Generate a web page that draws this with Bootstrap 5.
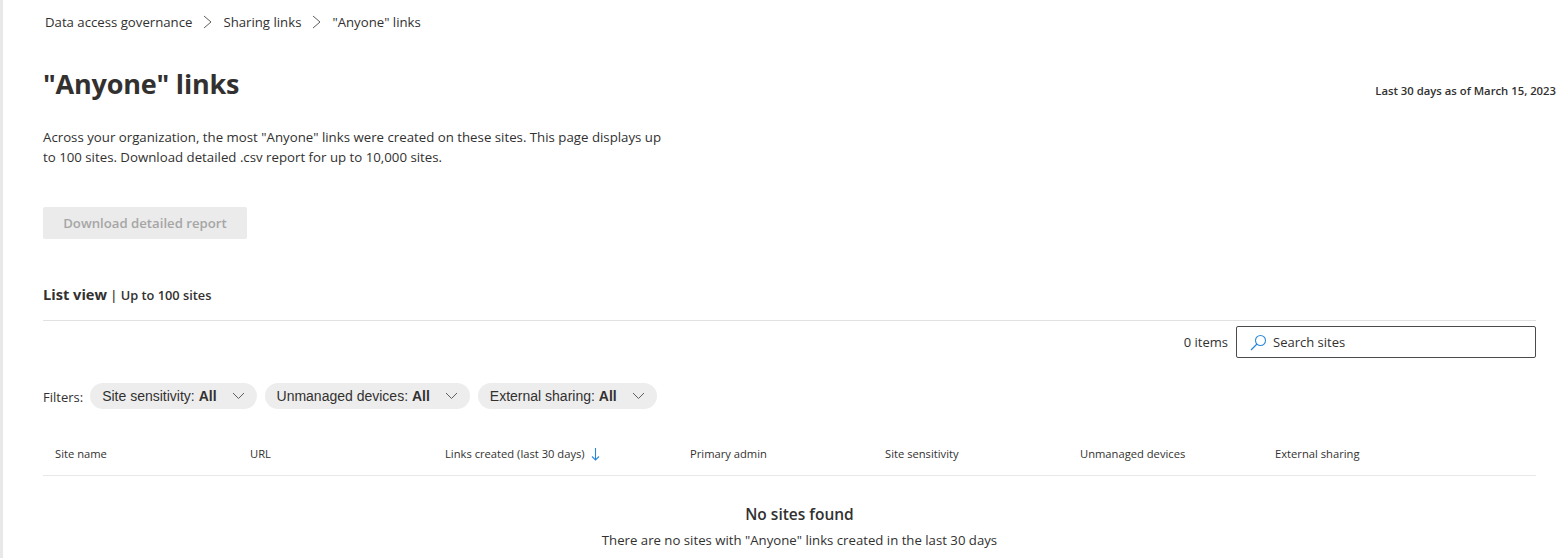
<!DOCTYPE html>
<html lang="en">
<head>
<meta charset="UTF-8">
<title>"Anyone" links</title>
<link rel="stylesheet" href="https://cdn.jsdelivr.net/npm/bootstrap@5.3.0/dist/css/bootstrap.min.css">
<style>
    html, body { height: 558px; overflow: hidden; }
    body {
        font-family: "Open Sans", "Noto Sans", sans-serif;
        color: #323130;
        background: #fff;
        font-size: 13px;
    }
    .page-wrap {
        height: 558px;
        border-left: 3px solid #e8e8e8;
        padding: 0 32px 0 40px;
    }
    .crumbs { height: 44px; padding-left: 2px; font-size: 13.2px; line-height: 18px; }
    .crumbs svg { margin: 0 11px 0 11px; }
    .title-row { height: 62px; margin-right: -20px; }
    .page-title { font-size: 27px; font-weight: 700; margin: 0; line-height: 36px; padding-top: 22px; letter-spacing: -.2px; }
    .as-of { font-size: 11.3px; font-weight: 600; padding-top: 39px; }
    .intro { width: 625px; font-size: 13.25px; line-height: 20px; height: 80px; margin-top: 21px; margin-bottom: 0; }
    .dl-btn {
        width: 204px; height: 32px; border: 0; border-radius: 2px;
        background: #ebebeb; color: #a6a6a6; font-weight: 600; font-size: 13.2px; padding: 1px 0 0;
    }
    .list-head { margin-top: 44px; height: 38px; line-height: 22px; border-bottom: 1px solid #e1e1e1; font-size: 12.8px; font-weight: 600; }
    .list-head b { font-size: 14.6px; font-weight: 700; }
    .search-row { height: 53px; padding-top: 5px; gap: 8px; font-size: 13px; }
    .item-count { padding-top: 7px; }
    .search-box {
        width: 300px; height: 32px; border: 1px solid #4b4b4b; border-radius: 2px;
        padding-left: 13px; gap: 6px;
    }
    .search-box span { padding-top: 1px; }
    .filter-row { height: 40px; padding-top: 4px; gap: 8px; font-size: 13px; }
    .filter-label { margin-right: -1px; padding-top: 3px; }
    .pill {
        height: 26px; border-radius: 13px; background: #ededed; padding: 0 12px;
        font-family: "Liberation Sans", Arial, sans-serif; font-size: 14px; color: #323130;
        gap: 15px;
    }
    .grid-head { margin-top: 19px; height: 43px; border-bottom: 1px solid #e8e8e8; font-size: 11.2px; padding-top: 1px; }
    .grid-head > div { width: 195px; padding-left: 12px; }
    .grid-head > div.wide { width: 245px; gap: 6px; }
    .empty-state { padding-left: 20px; }
    .empty-title { font-size: 15.5px; font-weight: 600; margin-top: 27px; line-height: 22px; }
    .empty-text { font-size: 13.2px; margin-top: 6px; line-height: 18px; }
</style>
</head>
<body>
<div class="page-wrap">
    <div class="crumbs d-flex align-items-center">
        <span>Data access governance</span>
        <svg width="9" height="14" viewBox="0 0 9 14"><path d="M1 1l7 6-7 6" fill="none" stroke="#605e5c" stroke-width="1"/></svg>
        <span>Sharing links</span>
        <svg width="9" height="14" viewBox="0 0 9 14"><path d="M1 1l7 6-7 6" fill="none" stroke="#605e5c" stroke-width="1"/></svg>
        <span>"Anyone" links</span>
    </div>
    <div class="title-row d-flex justify-content-between align-items-start">
        <h1 class="page-title">"Anyone" links</h1>
        <div class="as-of">Last 30 days as of March 15, 2023</div>
    </div>
    <p class="intro">Across your organization, the most "Anyone" links were created on these sites. This page displays up to 100 sites. Download detailed .csv report for up to 10,000 sites.</p>
    <button class="dl-btn d-block" disabled>Download detailed report</button>
    <div class="list-head"><b>List view</b> | Up to 100 sites</div>
    <div class="search-row d-flex justify-content-end align-items-start">
        <span class="item-count">0 items</span>
        <div class="search-box d-flex align-items-center">
            <svg width="17" height="17" viewBox="0 0 17 17"><circle cx="10.500" cy="6.500" r="5" fill="none" stroke="#2b88d8" stroke-width="1.1"/><path d="M7 10l-6 6" stroke="#2b88d8" stroke-width="1.2"/></svg>
            <span>Search sites</span>
        </div>
    </div>
    <div class="filter-row d-flex align-items-center">
        <span class="filter-label">Filters:</span>
        <div class="pill d-flex align-items-center"><span>Site sensitivity: <b>All</b></span>
            <svg width="13" height="8" viewBox="0 0 13 8"><path d="M1 1l5.500 5.500L12 1" fill="none" stroke="#605e5c"/></svg></div>
        <div class="pill d-flex align-items-center"><span>Unmanaged devices: <b>All</b></span>
            <svg width="13" height="8" viewBox="0 0 13 8"><path d="M1 1l5.500 5.500L12 1" fill="none" stroke="#605e5c"/></svg></div>
        <div class="pill d-flex align-items-center"><span>External sharing: <b>All</b></span>
            <svg width="13" height="8" viewBox="0 0 13 8"><path d="M1 1l5.500 5.500L12 1" fill="none" stroke="#605e5c"/></svg></div>
    </div>
    <div class="grid-head d-flex align-items-center">
        <div>Site name</div>
        <div>URL</div>
        <div class="wide d-flex align-items-center">Links created (last 30 days)
            <svg width="9" height="14" viewBox="0 0 9 14"><path d="M4.500 1v12M1 9.500l3.500 3.500 3.500-3.500" fill="none" stroke="#2b88d8" stroke-width="1.1"/></svg></div>
        <div>Primary admin</div>
        <div>Site sensitivity</div>
        <div>Unmanaged devices</div>
        <div>External sharing</div>
    </div>
    <div class="empty-state text-center">
        <div class="empty-title">No sites found</div>
        <div class="empty-text">There are no sites with "Anyone" links created in the last 30 days</div>
    </div>
</div>
<script src="https://cdn.jsdelivr.net/npm/bootstrap@5.3.0/dist/js/bootstrap.bundle.min.js"></script>
</body>
</html>
